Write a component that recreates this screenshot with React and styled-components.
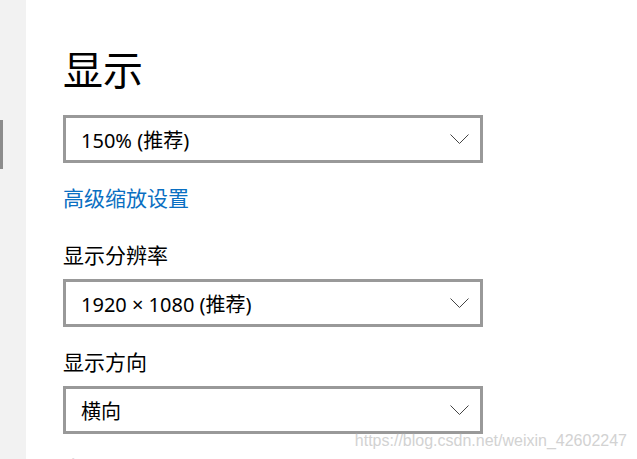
import React from "react";
import styled, { createGlobalStyle } from "styled-components";

const GlobalStyle = createGlobalStyle`
  html, body {
    margin: 0;
    padding: 0;
    height: 459px;
    overflow: hidden;
    background: #fff;
  }
  body {
    font-family: "Noto Sans", "Noto Sans CJK SC", sans-serif;
    color: #000;
  }
`;

const Page = styled.div`
  display: flex;
  height: 459px;
  position: relative;
`;

const Sidebar = styled.div`
  width: 26px;
  flex-shrink: 0;
  background: #f2f2f2;
  padding-top: 120px;
  box-sizing: border-box;
`;

const Indicator = styled.div`
  width: 3px;
  height: 49px;
  background: #8c8c8c;
`;

const Main = styled.main`
  flex: 1;
  padding: 42px 0 0 37px;
  display: flex;
  flex-direction: column;
  align-items: flex-start;

  & > * {
    flex-shrink: 0;
  }
`;

const Title = styled.h1`
  margin: 0;
  font-size: 40px;
  line-height: 52px;
  font-weight: 400;
  font-family: "Noto Sans CJK SC", sans-serif;
`;

const Select = styled.div`
  width: 420px;
  height: 48px;
  box-sizing: border-box;
  border: 3px solid #999;
  margin-top: ${(p) => p.$top}px;
  display: flex;
  align-items: center;
  justify-content: space-between;
  padding: 0 11px 0 15px;
  font-size: 20px;
`;

const Chevron = () => (
  <svg width="19" height="10" viewBox="0 0 19 10">
    <polyline points="0.5,0.5 9.5,9.5 18.5,0.5" fill="none" stroke="#444" strokeWidth="1" />
  </svg>
);

const Link = styled.a`
  margin-top: 19px;
  font-size: 21px;
  line-height: 30px;
  color: #0a6fc2;
  text-decoration: none;
  font-family: "Noto Sans CJK SC", sans-serif;
`;

const Label = styled.div`
  margin-top: ${(p) => p.$top}px;
  margin-bottom: 10px;
  font-size: 21px;
  line-height: 30px;
  font-family: "Noto Sans CJK SC", sans-serif;
  color: ${(p) => (p.$faded ? "#b0b0b0" : "#000")};
`;

const Watermark = styled.div`
  position: absolute;
  right: 10px;
  top: 432px;
  font-family: "Liberation Sans", Arial, sans-serif;
  font-size: 16px;
  line-height: 18px;
  color: #d2d2d2;
  text-shadow: 0 0 1px #fff;
`;

function Dropdown({ value, top }) {
  return (
    <Select $top={top}>
      <span>{value}</span>
      <Chevron />
    </Select>
  );
}

export default function App() {
  return (
    <>
      <GlobalStyle />
      <Page>
        <Sidebar>
          <Indicator />
        </Sidebar>
        <Main>
          <Title>显示</Title>
          <Dropdown value="150% (推荐)" top={21} />
          <Link href="#">高级缩放设置</Link>
          <Label $top={27}>显示分辨率</Label>
          <Dropdown value="1920 × 1080 (推荐)" top={0} />
          <Label $top={19}>显示方向</Label>
          <Dropdown value="横向" top={0} />
          <Label $top={18} $faded>多显示器</Label>
        </Main>
        <Watermark>https://blog.csdn.net/weixin_42602247</Watermark>
      </Page>
    </>
  );
}
